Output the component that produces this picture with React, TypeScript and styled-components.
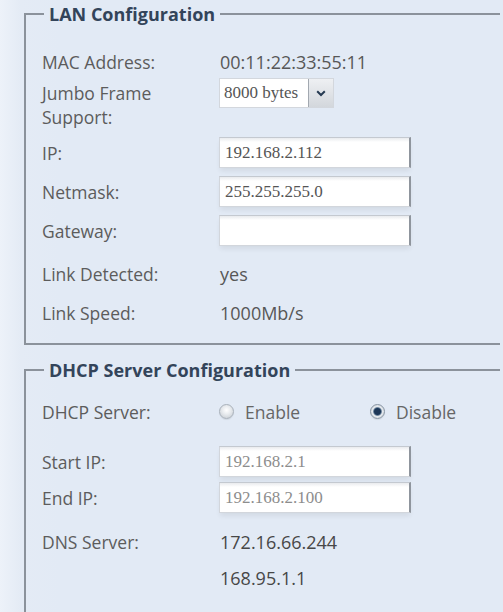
import React from "react";
import styled, { createGlobalStyle } from "styled-components";

const Global = createGlobalStyle`
  html, body { margin: 0; padding: 0; overflow: hidden; }
  body {
    background: linear-gradient(to right, #edf2f9 0px, #e4ebf5 20px, #e2eaf5 60px, #e2eaf5 100%);
    font-family: "Open Sans", "Liberation Sans", sans-serif;
  }
`;

const Page = styled.div`
  width: 503px;
  height: 612px;
  box-sizing: border-box;
  padding: 0 3px 0 24px;
  display: flex;
  flex-direction: column;
  gap: 11px;
`;

const Panel = styled.fieldset<{ $pb: number }>`
  margin: 0;
  padding: 0 0 ${(p) => p.$pb}px 16px;
  border: 2px solid #8b929b;
  border-right: none;
  min-width: 0;
`;

const Legend = styled.legend`
  margin-left: 2px;
  padding: 0 5px;
  font-size: 18px;
  font-weight: 700;
  line-height: 28px;
  color: #33445a;
`;

const Rows = styled.div`
  display: flex;
  flex-direction: column;
`;

const Row = styled.div<{ $mt: number; $top?: boolean }>`
  display: grid;
  grid-template-columns: 177px 1fr;
  align-items: ${(p) => (p.$top ? "start" : "center")};
  min-height: 31px;
  margin-top: ${(p) => p.$mt}px;
`;

const Label = styled.div<{ $pt?: number }>`
  font-size: 17.5px;
  line-height: 24px;
  color: #5c5c5c;
  padding-top: ${(p) => p.$pt ?? 0}px;
`;

const Value = styled.div<{ $dark?: boolean }>`
  font-size: 18px;
  line-height: 24px;
  color: ${(p) => (p.$dark ? "#474747" : "#575757")};
  padding-left: 1px;
`;

const TextInput = styled.input<{ $dim?: boolean }>`
  width: 192px;
  height: 31px;
  box-sizing: border-box;
  margin: 0;
  padding: 0 5px;
  border: 1px solid #d2d6dc;
  border-top-color: #c4c9d0;
  border-right: 2px solid #8f959d;
  border-radius: 0;
  background: linear-gradient(#e9ebee 0px, #ffffff 4px);
  box-shadow: 0 4px 5px -1px rgba(0, 0, 0, 0.07);
  font-family: "Liberation Serif", "Times New Roman", serif;
  font-size: 17px;
  color: ${(p) => (p.$dim ? "#8d8d8d" : "#555555")};
  outline: none;
`;

const SelectBox = styled.div`
  display: flex;
  width: 115px;
  height: 30px;
  box-sizing: border-box;
  background: #ffffff;
  border: 1px solid #d3d7dd;
`;

const SelectText = styled.span`
  flex: 1;
  padding-left: 4px;
  font-family: "Liberation Serif", "Times New Roman", serif;
  font-size: 17px;
  line-height: 28px;
  color: #555555;
`;

const DropButton = styled.span`
  width: 24px;
  display: flex;
  align-items: center;
  justify-content: center;
  background: linear-gradient(#eef0f3, #d3d7dc);
  border-left: 1px solid #a2a8b0;
`;

const RadioGroup = styled.div`
  display: grid;
  grid-template-columns: 151px auto;
  align-items: center;
`;

const RadioOption = styled.label`
  display: flex;
  align-items: center;
  gap: 11px;
  font-size: 17.5px;
  line-height: 24px;
  color: #666666;
`;

const RadioCircle = styled.span<{ $on?: boolean }>`
  width: 15px;
  height: 15px;
  box-sizing: border-box;
  border-radius: 50%;
  border: 1px solid ${(p) => (p.$on ? "#8794a2" : "#a9b1ba")};
  box-shadow: 0 1px 1px rgba(0, 0, 0, 0.08);
  background: ${(p) =>
    p.$on
      ? "radial-gradient(circle, #1c3657 0 3px, #56718d 3.8px, #e6eaee 4.8px, #c3cad2 100%)"
      : "radial-gradient(circle at 50% 40%, #ffffff 0, #e9ecef 40%, #c2c8cf 100%)"};
`;

const Chevron = () => (
  <svg width="10" height="7" viewBox="0 0 10 7">
    <path d="M1.2 1.2 L5 5 L8.8 1.2" fill="none" stroke="#263a52" strokeWidth="2" />
  </svg>
);

export default function App() {
  return (
    <>
      <Global />
      <Page>
        <Panel $pb={15}>
          <Legend>LAN Configuration</Legend>
          <Rows>
            <Row $mt={18}>
              <Label>MAC Address:</Label>
              <Value>00:11:22:33:55:11</Value>
            </Row>
            <Row $mt={1} $top>
              <Label $pt={3}>
                Jumbo Frame
                <br />
                Support:
              </Label>
              <SelectBox>
                <SelectText>8000 bytes</SelectText>
                <DropButton>
                  <Chevron />
                </DropButton>
              </SelectBox>
            </Row>
            <Row $mt={8}>
              <Label>IP:</Label>
              <TextInput readOnly value="192.168.2.112" />
            </Row>
            <Row $mt={8}>
              <Label>Netmask:</Label>
              <TextInput readOnly value="255.255.255.0" />
            </Row>
            <Row $mt={8}>
              <Label>Gateway:</Label>
              <TextInput readOnly value="" />
            </Row>
            <Row $mt={12}>
              <Label>Link Detected:</Label>
              <Value>yes</Value>
            </Row>
            <Row $mt={8}>
              <Label>Link Speed:</Label>
              <Value>1000Mb/s</Value>
            </Row>
          </Rows>
        </Panel>
        <Panel $pb={40}>
          <Legend>DHCP Server Configuration</Legend>
          <Rows>
            <Row $mt={12}>
              <Label>DHCP Server:</Label>
              <RadioGroup>
                <RadioOption>
                  <RadioCircle />
                  Enable
                </RadioOption>
                <RadioOption>
                  <RadioCircle $on />
                  Disable
                </RadioOption>
              </RadioGroup>
            </Row>
            <Row $mt={19}>
              <Label>Start IP:</Label>
              <TextInput readOnly $dim value="192.168.2.1" />
            </Row>
            <Row $mt={5}>
              <Label>End IP:</Label>
              <TextInput readOnly $dim value="192.168.2.100" />
            </Row>
            <Row $mt={13}>
              <Label>DNS Server:</Label>
              <Value $dark>172.16.66.244</Value>
            </Row>
            <Row $mt={5}>
              <Label />
              <Value $dark>168.95.1.1</Value>
            </Row>
          </Rows>
        </Panel>
      </Page>
    </>
  );
}
